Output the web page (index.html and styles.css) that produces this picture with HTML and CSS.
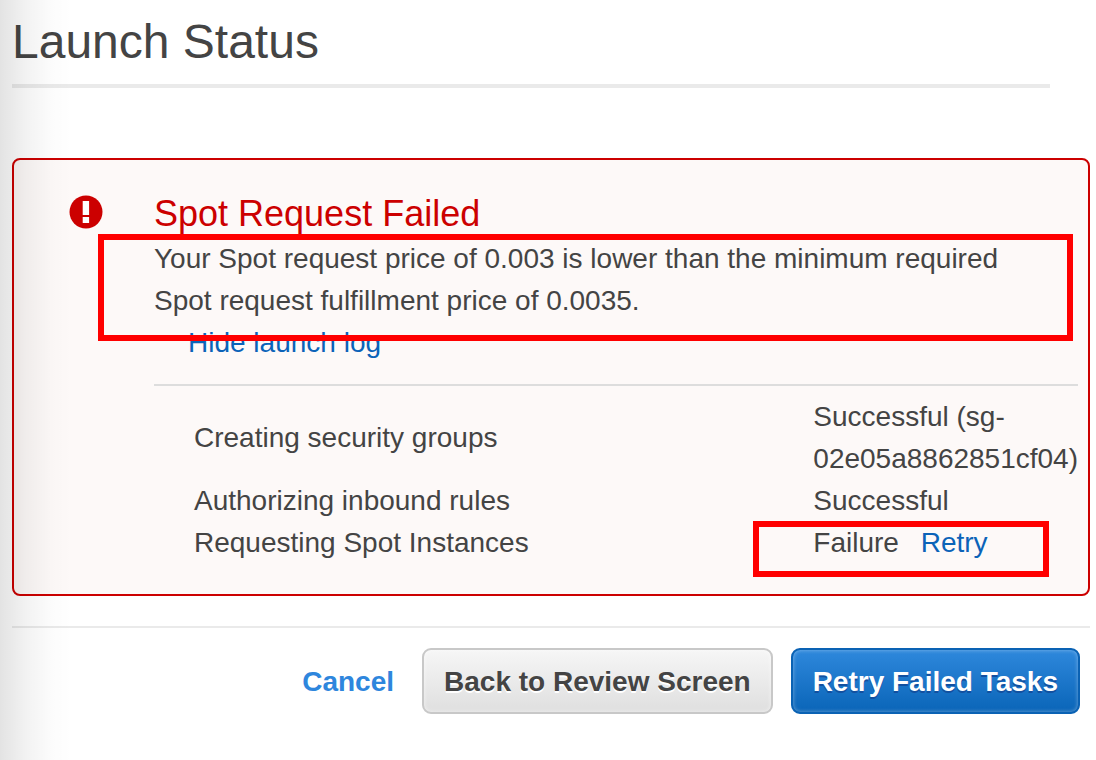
FILE: index.html
```
<!DOCTYPE html>
<html lang="en">
<head>
<meta charset="utf-8">
<title>Launch Status</title>
<link rel="stylesheet" href="styles.css">
</head>
<body>
<main class="page">
  <h1 class="title">Launch Status</h1>
  <section class="alert">
    <svg class="alert-icon" viewBox="0 0 34 34" aria-hidden="true">
      <circle cx="17" cy="17" r="16.500" fill="#c00"/>
      <path d="M13.700 6h6.400v14h-6.400zM13.700 22h6.400v6h-6.400z" fill="#fff"/>
    </svg>
    <div class="alert-body">
      <h2 class="alert-title">Spot Request Failed</h2>
      <p class="message">Your Spot request price of 0.003 is lower than the minimum required Spot request fulfillment price of 0.0035.</p>
      <a class="log-link" href="#">Hide launch log</a>
      <table class="log">
        <tbody>
          <tr><td>Creating security groups</td><td>Successful (sg-02e05a8862851cf04)</td></tr>
          <tr><td>Authorizing inbound rules</td><td>Successful</td></tr>
          <tr><td>Requesting Spot Instances</td><td>Failure <a class="retry" href="#">Retry</a></td></tr>
        </tbody>
      </table>
    </div>
    <div class="mark mark-message"></div>
    <div class="mark mark-retry"></div>
  </section>
  <footer class="actions">
    <a class="cancel" href="#">Cancel</a>
    <button class="button" type="button">Back to Review Screen</button>
    <button class="button primary" type="button">Retry Failed Tasks</button>
  </footer>
</main>
</body>
</html>
```
FILE: styles.css
```
* { box-sizing: border-box; }
body {
  margin: 0;
  min-height: 100vh;
  background: #fff;
  color: #444;
  font: 28px/42px "Liberation Sans", Arial, sans-serif;
}
body::before {
  content: "";
  position: absolute;
  z-index: 1;
  inset: 0 auto 0 0;
  width: 72px;
  min-height: 100vh;
  background: linear-gradient(to right, rgba(0, 0, 0, 0.11), rgba(0, 0, 0, 0.05) 36%, rgba(0, 0, 0, 0.01) 72%, rgba(0, 0, 0, 0));
  pointer-events: none;
}
a { color: #0b63b8; text-decoration: none; }
.page { padding: 12px 6px 0 12px; }
.title {
  margin: 0 40px 70px 0;
  padding-bottom: 12px;
  border-bottom: 4px solid #eaeaea;
  font-size: 48px;
  line-height: 60px;
  font-weight: 400;
}
.alert {
  position: relative;
  display: flex;
  gap: 51px;
  padding: 32px 10px 30px 55px;
  border: 2px solid #c00;
  border-radius: 8px;
  background: #fdf9f8;
}
.alert-icon { flex: none; width: 34px; height: 34px; margin-top: 3px; }
.alert-body { flex: 1; min-width: 0; }
.alert-title { margin: 0 0 2px; color: #c00; font-size: 36px; line-height: 44px; font-weight: 400; }
.message { margin: 0; padding-right: 40px; }
.log-link { display: block; margin-left: 34px; }
.log {
  width: 100%;
  margin-top: 20px;
  padding: 10px 0 0 40px;
  border-top: 2px solid #ddd;
  border-spacing: 0;
}
.log td { padding: 0; }
.log td:last-child { width: 264px; }
.retry { margin-left: 14px; }
.mark { position: absolute; border: 6px solid #f00; }
.mark-message { top: 74px; left: 84px; right: 15px; height: 107px; }
.mark-retry { top: 361px; right: 39px; width: 296px; height: 56px; }
.actions {
  display: flex;
  align-items: center;
  justify-content: flex-end;
  gap: 18px;
  margin-top: 30px;
  padding: 20px 10px 0 0;
  border-top: 2px solid #eaeaea;
}
.cancel { margin-right: 10px; padding-top: 2px; color: #2e86dd; font-weight: 700; }
.button {
  padding: 11px 20px 9px;
  border: 2px solid #c8c8c8;
  border-radius: 9px;
  background: linear-gradient(#f6f6f6, #dfdfdf);
  box-shadow: inset 0 0 4px rgba(255, 255, 255, 0.6);
  color: #444;
  font: 700 28px/42px "Liberation Sans", Arial, sans-serif;
  text-shadow: 0 2px 0 #fff;
}
.primary {
  border-color: #0a62b4;
  background: linear-gradient(#2e88dc, #0a65b8);
  box-shadow: inset 0 0 4px rgba(255, 255, 255, 0.4);
  color: #fff;
  text-shadow: 0 2px 0 #1250a0;
}
```
